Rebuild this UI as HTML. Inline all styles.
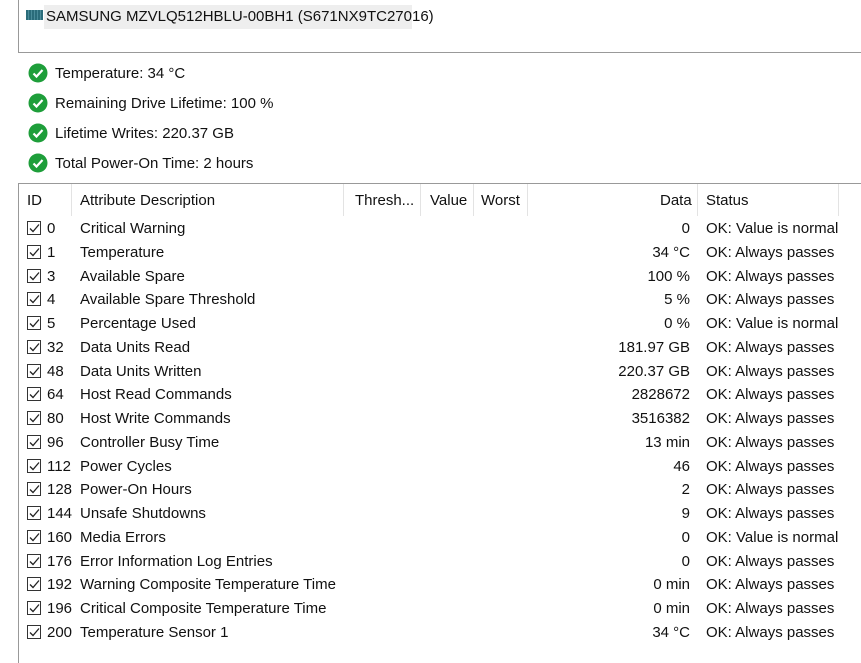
<!DOCTYPE html><html><head><style>
*{margin:0;padding:0;box-sizing:border-box}
body{width:861px;height:657px;background:#fff;font-family:"Liberation Sans",sans-serif;font-size:15px;color:#111;position:relative;overflow:hidden}
.top{position:absolute;left:18px;top:-2px;width:850px;height:55px;border:1px solid #999;}
.sel{position:absolute;left:44px;top:5px;height:24px;width:368px;background:#eeeeee}
.dev{position:absolute;left:26px;top:8px;font-size:15px}
.ic{display:inline-block;width:17px;height:10px;background:repeating-linear-gradient(90deg,#2a6c7a 0 2px,#4a8c9a 2px 3px);vertical-align:1px;margin-right:3px}
.st{position:absolute;left:28px;height:20px;line-height:21px}
.st svg{position:absolute;left:0;top:0}
.st span{position:absolute;left:27px;white-space:nowrap}
.tbl{position:absolute;left:18px;top:183px;width:850px;height:480px;border-top:1px solid #999;border-left:1px solid #999}
.h{position:absolute;top:192px}
.sep{position:absolute;top:184px;height:32px;width:1px;background:#e3e3e3}
.r{position:absolute;left:0;width:861px;height:22px;line-height:22px}
.r .cb{position:absolute;left:27px;top:3px;width:14px;height:14px;border:1px solid #333}
.r .cb svg{position:absolute;left:1px;top:1px}
.r .id{position:absolute;left:47px}
.r .d{position:absolute;left:80px;white-space:nowrap}
.r .v{position:absolute;right:171px;text-align:right;white-space:nowrap}
.r .s{position:absolute;left:706px;white-space:nowrap}
</style></head><body>
<div class="top"></div>
<div class="sel"></div>
<div class="dev"><span class="ic"></span>SAMSUNG MZVLQ512HBLU-00BH1 (S671NX9TC27016)</div>
<div class="st" style="top:63px"><svg width="20" height="20"><circle cx="10" cy="10" r="9.5" fill="#1e9e3a"/><path d="M5.5 10.5l3 3 6-6.5" stroke="#fff" stroke-width="2.2" fill="none"/></svg><span>Temperature: 34 °C</span></div>
<div class="st" style="top:93px"><svg width="20" height="20"><circle cx="10" cy="10" r="9.5" fill="#1e9e3a"/><path d="M5.5 10.5l3 3 6-6.5" stroke="#fff" stroke-width="2.2" fill="none"/></svg><span>Remaining Drive Lifetime: 100 %</span></div>
<div class="st" style="top:123px"><svg width="20" height="20"><circle cx="10" cy="10" r="9.5" fill="#1e9e3a"/><path d="M5.5 10.5l3 3 6-6.5" stroke="#fff" stroke-width="2.2" fill="none"/></svg><span>Lifetime Writes: 220.37 GB</span></div>
<div class="st" style="top:153px"><svg width="20" height="20"><circle cx="10" cy="10" r="9.5" fill="#1e9e3a"/><path d="M5.5 10.5l3 3 6-6.5" stroke="#fff" stroke-width="2.2" fill="none"/></svg><span>Total Power-On Time: 2 hours</span></div>
<div class="tbl"></div>
<div class="sep" style="left:71px"></div><div class="sep" style="left:343px"></div><div class="sep" style="left:420px"></div><div class="sep" style="left:473px"></div><div class="sep" style="left:527px"></div><div class="sep" style="left:697px"></div><div class="sep" style="left:838px"></div>
<div class="h" style="left:27px">ID</div>
<div class="h" style="left:80px">Attribute Description</div>
<div class="h" style="left:355px">Thresh...</div>
<div class="h" style="left:430px">Value</div>
<div class="h" style="left:481px">Worst</div>
<div class="h" style="left:660px">Data</div>
<div class="h" style="left:706px">Status</div>
<div id="rows"></div>
<script>
var d=[["0","Critical Warning","0","OK: Value is normal"],["1","Temperature","34 °C","OK: Always passes"],["3","Available Spare","100 %","OK: Always passes"],["4","Available Spare Threshold","5 %","OK: Always passes"],["5","Percentage Used","0 %","OK: Value is normal"],["32","Data Units Read","181.97 GB","OK: Always passes"],["48","Data Units Written","220.37 GB","OK: Always passes"],["64","Host Read Commands","2828672","OK: Always passes"],["80","Host Write Commands","3516382","OK: Always passes"],["96","Controller Busy Time","13 min","OK: Always passes"],["112","Power Cycles","46","OK: Always passes"],["128","Power-On Hours","2","OK: Always passes"],["144","Unsafe Shutdowns","9","OK: Always passes"],["160","Media Errors","0","OK: Value is normal"],["176","Error Information Log Entries","0","OK: Always passes"],["192","Warning Composite Temperature Time","0 min","OK: Always passes"],["196","Critical Composite Temperature Time","0 min","OK: Always passes"],["200","Temperature Sensor 1","34 °C","OK: Always passes"]];
var h="";d.forEach(function(r,i){var t=218+i*23.75;h+='<div class="r" style="top:'+t+'px"><div class="cb"><svg width="11" height="11"><path d="M1 5.5l3 3 6-7" stroke="#222" stroke-width="1.3" fill="none"/></svg></div><span class="id">'+r[0]+'</span><span class="d">'+r[1]+'</span><span class="v">'+r[2]+'</span><span class="s">'+r[3]+'</span></div>'});
document.getElementById("rows").innerHTML=h;
</script>
</body></html>
